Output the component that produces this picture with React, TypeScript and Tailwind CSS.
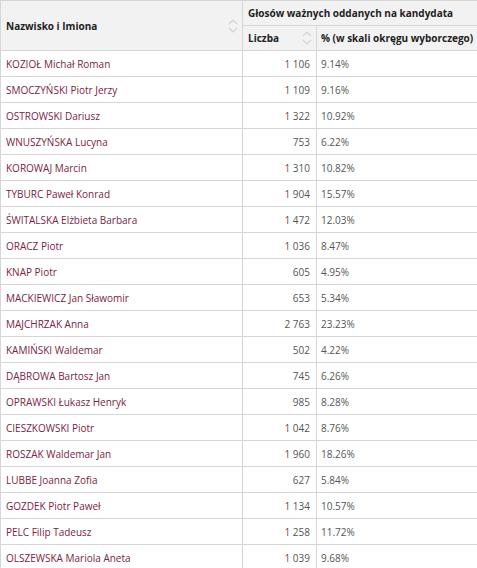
import React from "react";

const rows: [string, string, string][] = [
  ["KOZIOŁ Michał Roman", "1 106", "9.14%"],
  ["SMOCZYŃSKI Piotr Jerzy", "1 109", "9.16%"],
  ["OSTROWSKI Dariusz", "1 322", "10.92%"],
  ["WNUSZYŃSKA Lucyna", "753", "6.22%"],
  ["KOROWAJ Marcin", "1 310", "10.82%"],
  ["TYBURC Paweł Konrad", "1 904", "15.57%"],
  ["ŚWITALSKA Elżbieta Barbara", "1 472", "12.03%"],
  ["ORACZ Piotr", "1 036", "8.47%"],
  ["KNAP Piotr", "605", "4.95%"],
  ["MACKIEWICZ Jan Sławomir", "653", "5.34%"],
  ["MAJCHRZAK Anna", "2 763", "23.23%"],
  ["KAMIŃSKI Waldemar", "502", "4.22%"],
  ["DĄBROWA Bartosz Jan", "745", "6.26%"],
  ["OPRAWSKI Łukasz Henryk", "985", "8.28%"],
  ["CIESZKOWSKI Piotr", "1 042", "8.76%"],
  ["ROSZAK Waldemar Jan", "1 960", "18.26%"],
  ["LUBBE Joanna Zofia", "627", "5.84%"],
  ["GOZDEK Piotr Paweł", "1 134", "10.57%"],
  ["PELC Filip Tadeusz", "1 258", "11.72%"],
  ["OLSZEWSKA Mariola Aneta", "1 039", "9.68%"],
];

function SortIcon() {
  return (
    <svg width="10" height="16" viewBox="0 0 10 16" fill="none" stroke="#d4d4d4" strokeWidth="1.2">
      <path d="M1 6 L5 2 L9 6" />
      <path d="M1 10 L5 14 L9 10" />
    </svg>
  );
}

export default function App() {
  return (
    <div className="w-[477px] h-[568px] overflow-hidden bg-white" style={{ fontFamily: '"Open Sans", sans-serif' }}>
      <table className="border-collapse w-[478px] table-fixed text-[10px] leading-[14px] whitespace-nowrap">
        <colgroup>
          <col className="w-[242px]" />
          <col className="w-[74px]" />
          <col />
        </colgroup>
        <thead>
          <tr className="h-[25px]">
            <th rowSpan={2} className="bg-[#f2f2f2] border border-[#d6d6d6] text-left font-bold text-[#222] pl-[5px] pr-[4px] align-middle">
              <div className="flex items-center justify-between">
                <span>Nazwisko i Imiona</span>
                <SortIcon />
              </div>
            </th>
            <th colSpan={2} className="bg-[#f2f2f2] border border-[#d6d6d6] text-left font-bold text-[#222] pl-[5px]">
              Głosów ważnych oddanych na kandydata
            </th>
          </tr>
          <tr className="h-[25px]">
            <th className="bg-[#f2f2f2] border border-[#d6d6d6] text-left font-bold text-[#222] pl-[5px] pr-[4px]">
              <div className="flex items-center justify-between">
                <span>Liczba</span>
                <SortIcon />
              </div>
            </th>
            <th className="bg-[#f2f2f2] border border-[#d6d6d6] text-left font-bold text-[#222] pl-[4px]">
              % (w skali okręgu wyborczego)
            </th>
          </tr>
        </thead>
        <tbody>
          {rows.map(([n, c, p]) => (
            <tr key={n} className="h-[26px]">
              <td className="border border-[#d6d6d6] pl-[5px] text-[#7b2342]">{n}</td>
              <td className="border border-[#d6d6d6] pr-[6px] text-right text-[#555]">{c}</td>
              <td className="border border-[#d6d6d6] pl-[4px] text-[#555]">{p}</td>
            </tr>
          ))}
        </tbody>
      </table>
    </div>
  );
}
